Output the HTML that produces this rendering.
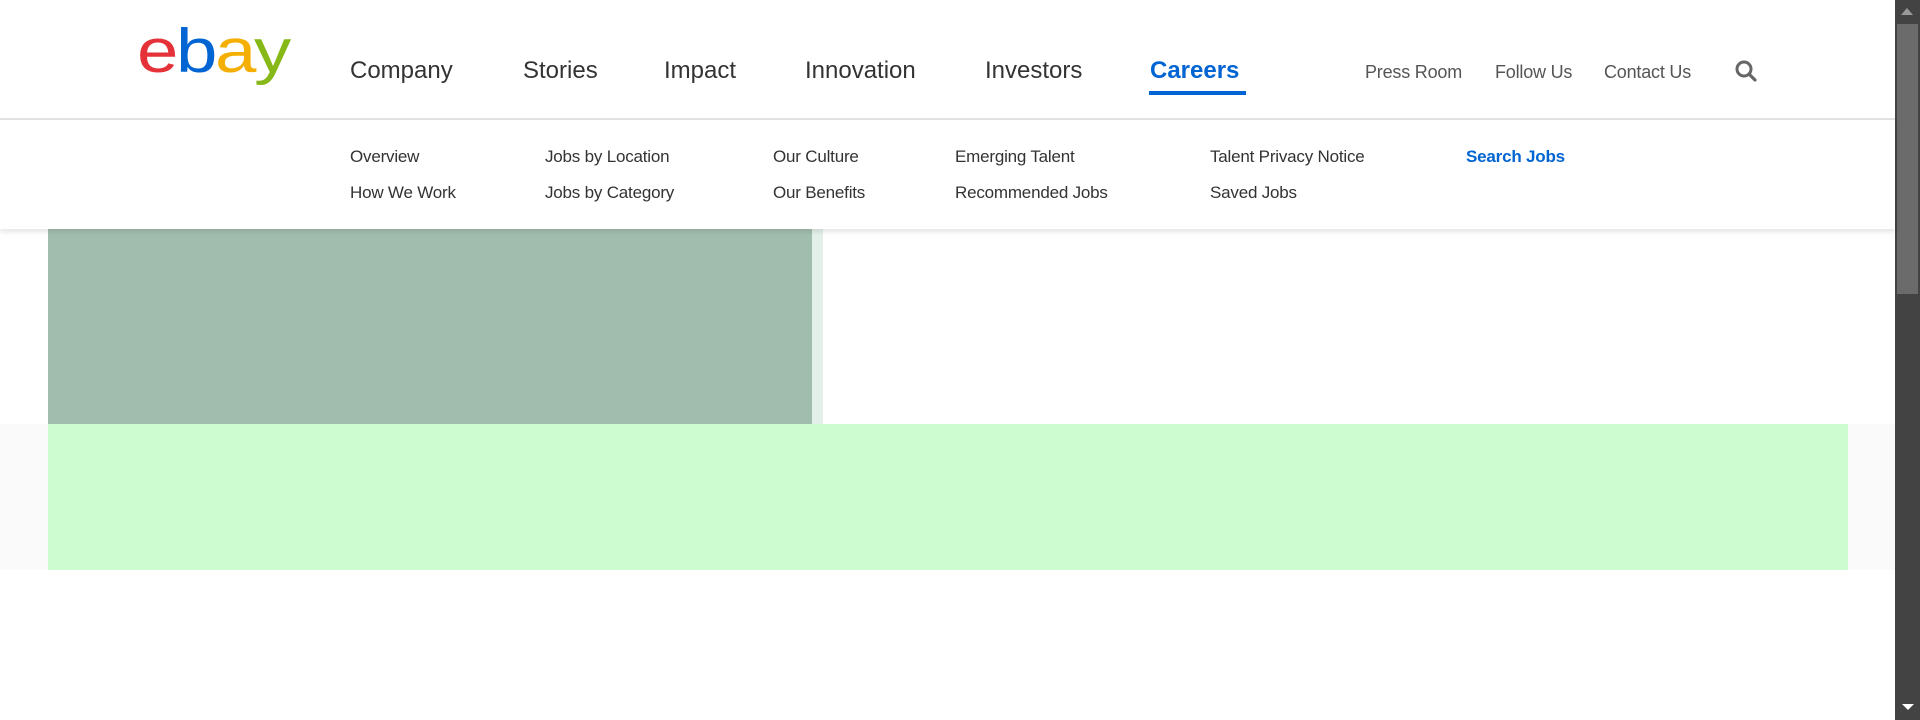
<!DOCTYPE html>
<html><head><meta charset="utf-8"><style>
*{margin:0;padding:0;box-sizing:border-box}
body{width:1920px;height:720px;overflow:hidden;background:#fff;font-family:"Liberation Sans",Arial,sans-serif;position:relative}
.a{position:absolute;white-space:nowrap}
.logo{left:137px;top:21px;font-size:62px;letter-spacing:-2px;line-height:1;transform:scaleX(1.2);transform-origin:0 0}
.nav{top:57px;font-size:24px;color:#333;letter-spacing:0}
.rn{top:62px;font-size:18px;color:#555;letter-spacing:-0.2px}
.sub{font-size:17px;color:#333;letter-spacing:-0.2px}
</style></head><body>
<div class="a logo"><span style="color:#e53238">e</span><span style="color:#0064d2">b</span><span style="color:#f5af02">a</span><span style="color:#86b817">y</span></div>
<div class="a nav" style="left:350px">Company</div>
<div class="a nav" style="left:523px">Stories</div>
<div class="a nav" style="left:664px">Impact</div>
<div class="a nav" style="left:805px">Innovation</div>
<div class="a nav" style="left:985px">Investors</div>
<div class="a nav" style="left:1150px;color:#0064d2;font-weight:bold">Careers</div>
<div class="a" style="left:1149px;top:91px;width:97px;height:4px;background:#0064d2"></div>
<div class="a rn" style="left:1365px">Press Room</div>
<div class="a rn" style="left:1495px">Follow Us</div>
<div class="a rn" style="left:1604px">Contact Us</div>
<svg class="a" style="left:1734px;top:59px" width="26" height="24" viewBox="0 0 26 24"><circle cx="10" cy="10" r="7" fill="none" stroke="#666" stroke-width="3"/><line x1="15" y1="15" x2="21" y2="21" stroke="#666" stroke-width="3.2" stroke-linecap="round"/></svg>
<div class="a" style="left:0;top:118px;width:1895px;height:2px;background:#e2e2e2"></div>
<div class="a" style="left:0;top:120px;width:1895px;height:109px;background:#fff;box-shadow:0 3px 5px rgba(0,0,0,0.1);z-index:2"></div>
<div style="position:absolute;left:0;top:0;z-index:3">
<div class="a sub" style="left:350px;top:147px">Overview</div>
<div class="a sub" style="left:350px;top:183px">How We Work</div>
<div class="a sub" style="left:545px;top:147px">Jobs by Location</div>
<div class="a sub" style="left:545px;top:183px">Jobs by Category</div>
<div class="a sub" style="left:773px;top:147px">Our Culture</div>
<div class="a sub" style="left:773px;top:183px">Our Benefits</div>
<div class="a sub" style="left:955px;top:147px">Emerging Talent</div>
<div class="a sub" style="left:955px;top:183px">Recommended Jobs</div>
<div class="a sub" style="left:1210px;top:147px">Talent Privacy Notice</div>
<div class="a sub" style="left:1210px;top:183px">Saved Jobs</div>
<div class="a sub" style="left:1466px;top:147px;color:#0064d2;font-weight:bold">Search Jobs</div>
</div>
<div class="a" style="left:48px;top:229px;width:764px;height:195px;background:#a1bdae"></div>
<div class="a" style="left:812px;top:229px;width:11px;height:195px;background:#e3f0ea"></div>
<div class="a" style="left:0;top:424px;width:1895px;height:146px;background:#fafafa"></div>
<div class="a" style="left:48px;top:424px;width:1800px;height:146px;background:#ccfccf"></div>
<div class="a" style="left:1895px;top:0;width:25px;height:720px;background:#434343"></div>
<div class="a" style="left:1897px;top:24px;width:21px;height:270px;background:#6b6b6b"></div>
<div class="a" style="left:1901px;top:8px;width:0;height:0;border-left:6px solid transparent;border-right:6px solid transparent;border-bottom:7px solid #999"></div>
<div class="a" style="left:1902px;top:704px;width:0;height:0;border-left:6px solid transparent;border-right:6px solid transparent;border-top:6px solid #fff"></div>
</body></html>
